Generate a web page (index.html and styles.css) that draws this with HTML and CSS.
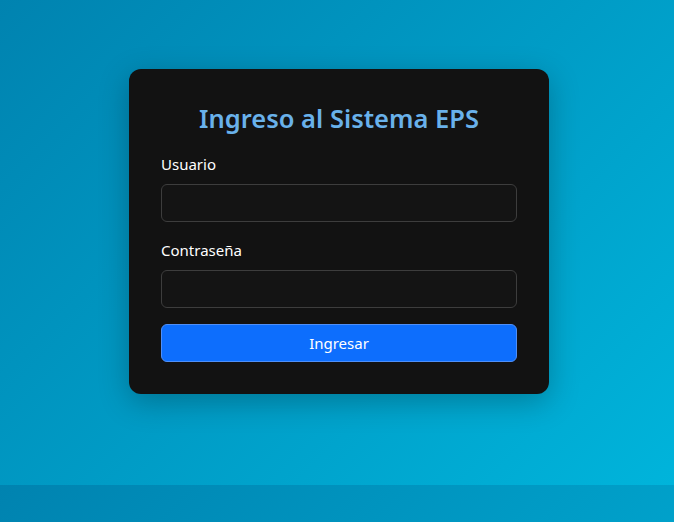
FILE: index.html
```html
<!DOCTYPE html>
<html lang="es">
<head>
<meta charset="utf-8">
<title>Ingreso al Sistema EPS</title>
<link rel="stylesheet" href="styles.css">
</head>
<body>
<main class="page">
  <form class="card">
    <h3 class="title">Ingreso al Sistema EPS</h3>
    <div class="field">
      <label class="label" for="u">Usuario</label>
      <input class="input" id="u" type="text">
    </div>
    <div class="field">
      <label class="label" for="p">Contraseña</label>
      <input class="input" id="p" type="password">
    </div>
    <button class="btn" type="button">Ingresar</button>
  </form>
</main>
</body>
</html>
```
FILE: styles.css
```css
html {
  background: linear-gradient(135deg, #0083b0 0%, #00b4db 100%);
  background-size: 100% 485px;
  background-repeat: repeat;
  height: 100%;
}
body {
  margin: 0;
  font-family: "Noto Sans", "Open Sans", sans-serif;
  color: #fff;
}
.page {
  height: 485px;
  display: flex;
  justify-content: center;
  align-items: flex-start;
  padding-top: 69px;
  padding-left: 4px;
  box-sizing: border-box;
}
.card {
  width: 420px;
  box-sizing: border-box;
  padding: 32px;
  background: #121212;
  border-radius: 12px;
  box-shadow: 0 8px 30px rgba(0, 0, 0, 0.25);
}
.title {
  margin: 0 0 17px;
  text-align: center;
  color: #69b1ea;
  font-size: 25.5px;
  font-weight: 600;
  line-height: 34px;
}
.field {
  margin-bottom: 16px;
}
.label {
  display: block;
  font-size: 15px;
  line-height: 24px;
  margin-bottom: 8px;
  color: #fff;
}
.input {
  display: block;
  width: 100%;
  height: 38px;
  box-sizing: border-box;
  background: #141414;
  border: 1px solid #3d3d3d;
  border-radius: 6px;
  color: #fff;
  font: inherit;
  padding: 6px 12px;
}
.btn {
  display: block;
  width: 100%;
  height: 38px;
  background: #0d6efd;
  border: 1px solid #4f8ff7;
  border-radius: 6px;
  color: #fff;
  font-family: inherit;
  font-size: 15px;
  cursor: pointer;
}
```
